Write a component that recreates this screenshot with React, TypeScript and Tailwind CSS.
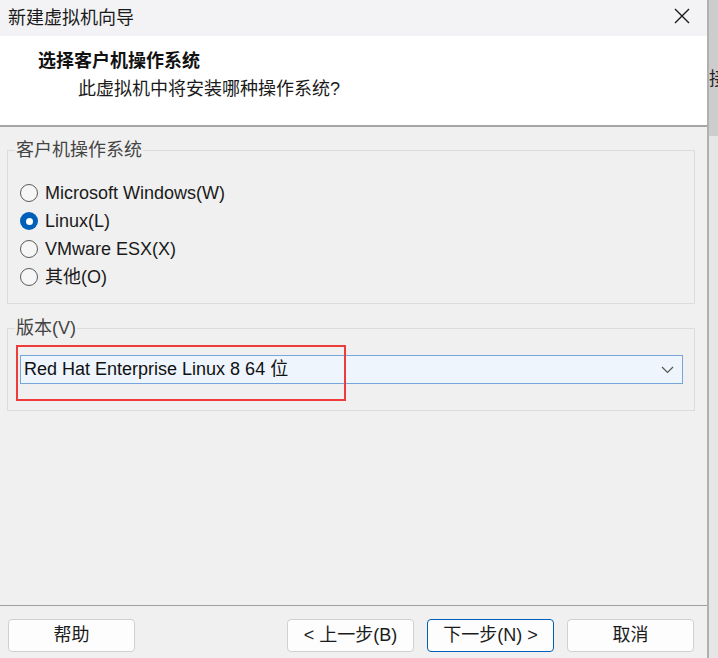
import React from "react";

const font = { fontFamily: '"Liberation Sans", "Noto Sans CJK SC", sans-serif' };

const options = [
  { label: "Microsoft Windows(W)", checked: false },
  { label: "Linux(L)", checked: true },
  { label: "VMware ESX(X)", checked: false },
  { label: "其他(O)", checked: false },
];

const Radio = ({ checked }: { checked: boolean }) =>
  checked ? (
    <span className="flex h-[18px] w-[18px] items-center justify-center rounded-full bg-[#005fb8]">
      <span className="h-[7px] w-[7px] rounded-full bg-white"></span>
    </span>
  ) : (
    <span className="h-[18px] w-[18px] rounded-full border border-[#5a5a5a] bg-[#f6f6f6]"></span>
  );

const Button = ({ children, primary }: { children: React.ReactNode; primary?: boolean }) => (
  <button
    className={
      primary
        ? "flex h-[33px] w-[127px] items-center justify-center rounded-[4px] border border-[#005fb8] bg-[#fdfdfd] text-[18px] text-[#1b1b1b]"
        : "flex h-[33px] w-[127px] items-center justify-center rounded-[4px] border border-[#d0d0d0] bg-[#fdfdfd] text-[18px] text-[#1b1b1b]"
    }
  >
    {children}
  </button>
);

export default function App() {
  return (
    <div className="relative flex h-[658px] w-[718px] overflow-hidden bg-[#f0f0f0]" style={font}>
      <div className="flex w-[707px] flex-col">
        {/* title bar */}
        <div className="flex h-[36px] items-center justify-between bg-[#f3f3f5] pl-2 pr-[17px]">
          <p className="text-[18px] leading-none text-[#1a1a1a]">新建虚拟机向导</p>
          <svg width="16" height="16" viewBox="0 0 16 16" className="mb-[4px]">
            <path d="M1 1 L15 15 M15 1 L1 15" stroke="#1a1a1a" strokeWidth="1.4" />
          </svg>
        </div>

        {/* header */}
        <div className="h-[91px] border-b-2 border-[#a6a6a6] bg-white pt-[13px]">
          <p className="pl-[38px] text-[18px] font-bold leading-[24px] text-[#111]">选择客户机操作系统</p>
          <p className="mt-[4px] pl-[78px] text-[18px] leading-[24px] text-[#1a1a1a]">此虚拟机中将安装哪种操作系统?</p>
        </div>

        {/* body */}
        <div className="flex flex-1 flex-col px-[7px]">
          <fieldset className="mt-[11px] w-[688px] border border-[#dcdcdc] pb-[12px] pl-[12px]">
            <legend className="-ml-[5px] px-[1px] text-[18px] leading-[24px] text-[#444]">客户机操作系统</legend>
            <div className="flex flex-col pt-[17px]">
              {options.map((o) => (
                <label key={o.label} className="flex h-[28px] items-center gap-[7px] text-[18px] text-[#1a1a1a]">
                  <Radio checked={o.checked} />
                  <span>{o.label}</span>
                </label>
              ))}
            </div>
          </fieldset>

          <fieldset className="mt-[12px] w-[688px] border border-[#dcdcdc] pb-[26px] pl-[12px] pr-[11px]">
            <legend className="-ml-[5px] px-[1px] text-[18px] leading-[24px] text-[#444]">版本(V)</legend>
            <div className="mt-[15px] flex h-[29px] items-center justify-between border border-[#78a6d9] bg-[#eef5fd] pl-[3px] pr-[8px]">
              <span className="text-[18px] text-[#111]">Red Hat Enterprise Linux 8 64 位</span>
              <svg width="13" height="8" viewBox="0 0 13 8">
                <path d="M1 1 L6.5 6.5 L12 1" stroke="#555" strokeWidth="1.2" fill="none" />
              </svg>
            </div>
          </fieldset>
        </div>

        {/* footer */}
        <div className="flex h-[53px] items-start justify-between border-t border-[#a0a0a0] pl-2 pr-[13px] pt-[13px]">
          <Button>帮助</Button>
          <div className="flex gap-[13px]">
            <Button>&lt; 上一步(B)</Button>
            <Button primary>下一步(N) &gt;</Button>
            <Button>取消</Button>
          </div>
        </div>
      </div>

      {/* background window strip */}
      <div className="flex w-[11px] border-l-2 border-[#b0b0b0]">
        <div className="flex w-full flex-col">
          <div className="h-[136px] overflow-hidden bg-[#cdcdcd] pt-[68px]">
            <span className="text-[18px] leading-none text-[#222]">接</span>
          </div>
          <div className="flex-1 bg-[#e6e6e6]"></div>
        </div>
      </div>

      {/* red annotation box */}
      <div className="absolute left-[16px] top-[345px] h-[56px] w-[330px] border-2 border-[#ee3b3b]"></div>
    </div>
  );
}
